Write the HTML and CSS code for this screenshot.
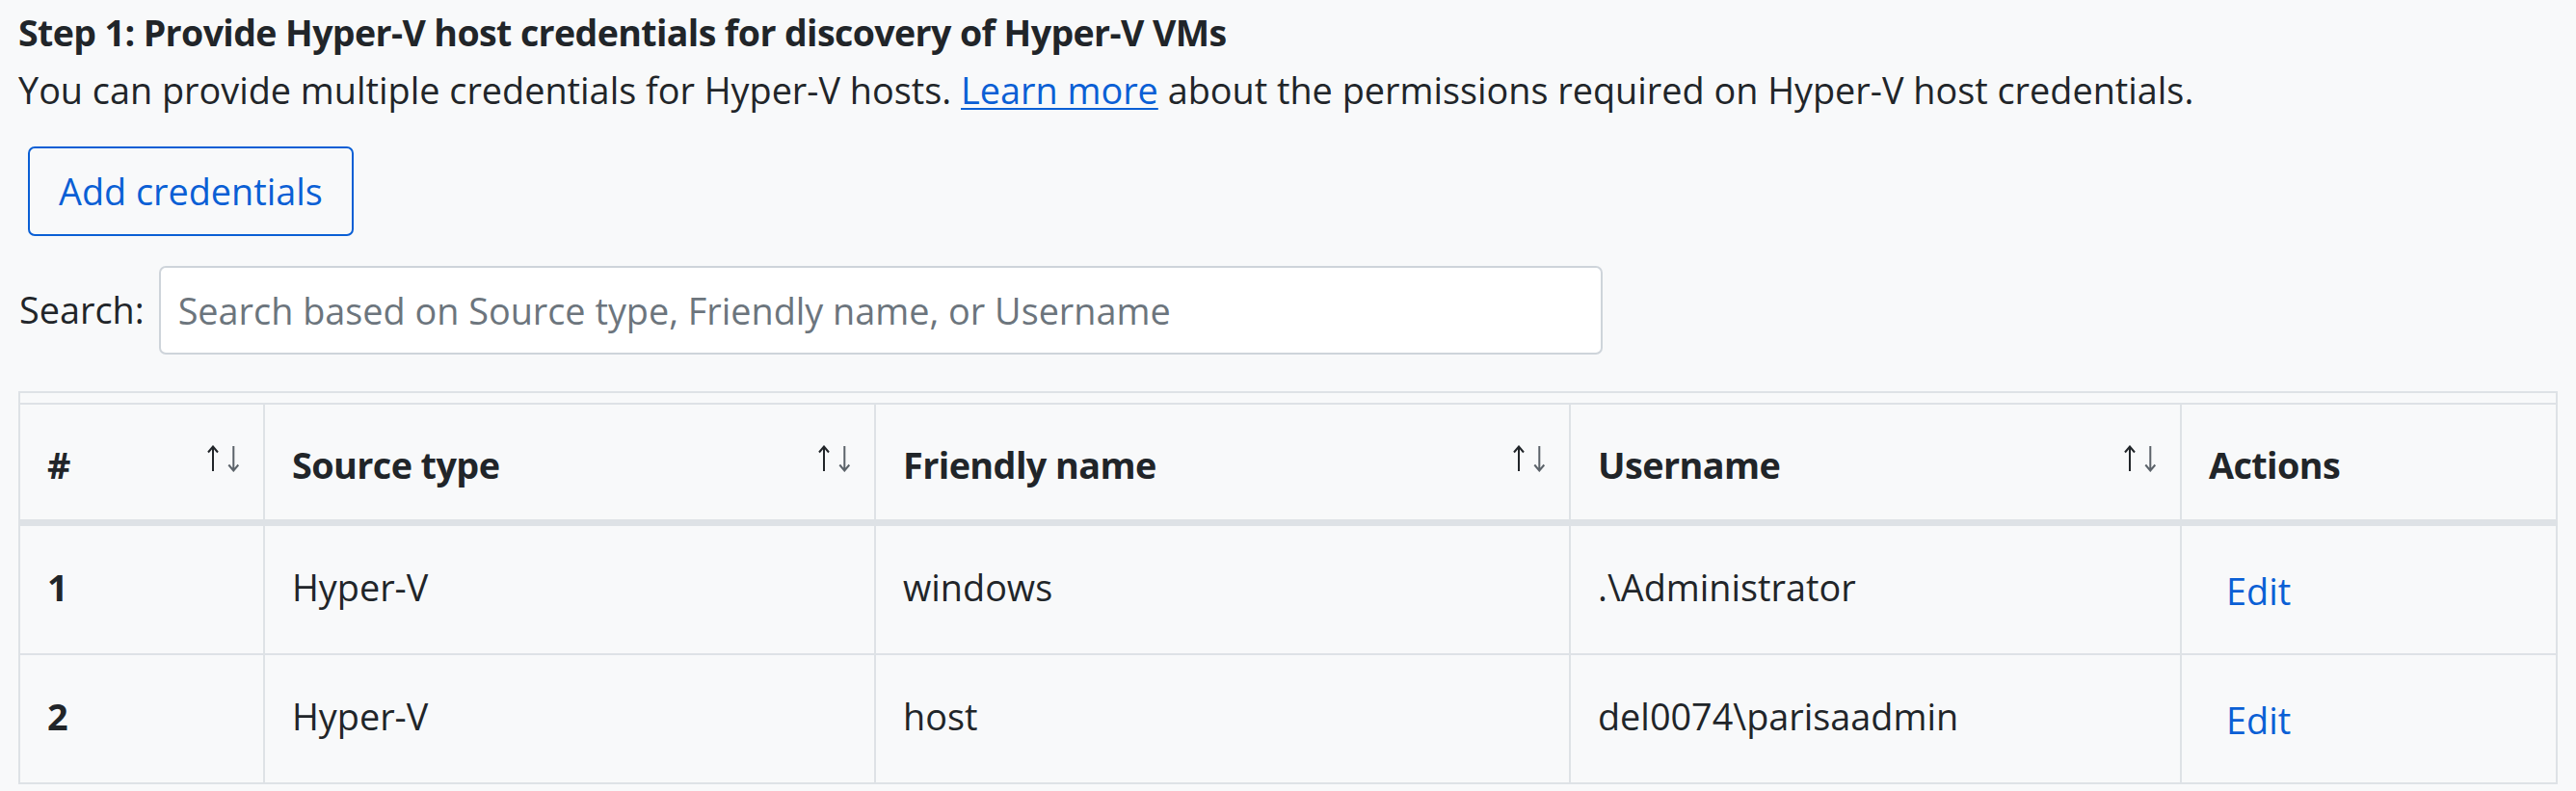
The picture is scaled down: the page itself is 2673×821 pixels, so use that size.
FILE: index.html
```html
<!DOCTYPE html>
<html lang="en">
<head>
<meta charset="utf-8">
<title>Hyper-V host credentials</title>
<link rel="stylesheet" href="styles.css">
</head>
<body>
<main class="page">
  <h2 class="step-title">Step 1: Provide Hyper-V host credentials for discovery of Hyper-V VMs</h2>
  <p class="step-desc">You can provide multiple credentials for Hyper-V hosts. <a href="#" class="link">Learn more</a> about the permissions required on Hyper-V host credentials.</p>
  <button type="button" class="btn-outline">Add credentials</button>
  <div class="search-row">
    <label class="search-label" for="search">Search:</label>
    <input id="search" class="search-input" type="text" placeholder="Search based on Source type, Friendly name, or Username">
  </div>
  <div class="table-wrap">
    <table class="cred-table">
      <colgroup>
        <col class="c1"><col class="c2"><col class="c3"><col class="c4"><col class="c5">
      </colgroup>
      <thead>
        <tr>
          <th><div class="th-inner"><span>#</span><svg class="sort" viewBox="0 0 35 28" width="35" height="28"><path class="up" d="M6 27V2M1 7.5L6 1.5L11 7.5"/><path class="down" d="M27.3 1V26M22.3 20.5L27.3 26.5L32.3 20.5"/></svg></div></th>
          <th><div class="th-inner"><span>Source type</span><svg class="sort" viewBox="0 0 35 28" width="35" height="28"><path class="up" d="M6 27V2M1 7.5L6 1.5L11 7.5"/><path class="down" d="M27.3 1V26M22.3 20.5L27.3 26.5L32.3 20.5"/></svg></div></th>
          <th><div class="th-inner"><span>Friendly name</span><svg class="sort" viewBox="0 0 35 28" width="35" height="28"><path class="up" d="M6 27V2M1 7.5L6 1.5L11 7.5"/><path class="down" d="M27.3 1V26M22.3 20.5L27.3 26.5L32.3 20.5"/></svg></div></th>
          <th><div class="th-inner"><span>Username</span><svg class="sort" viewBox="0 0 35 28" width="35" height="28"><path class="up" d="M6 27V2M1 7.5L6 1.5L11 7.5"/><path class="down" d="M27.3 1V26M22.3 20.5L27.3 26.5L32.3 20.5"/></svg></div></th>
          <th><div class="th-inner"><span>Actions</span></div></th>
        </tr>
      </thead>
      <tbody>
        <tr>
          <td class="num">1</td>
          <td>Hyper-V</td>
          <td>windows</td>
          <td>.\Administrator</td>
          <td><a href="#" class="edit">Edit</a></td>
        </tr>
        <tr>
          <td class="num">2</td>
          <td>Hyper-V</td>
          <td>host</td>
          <td>del0074\parisaadmin</td>
          <td><a href="#" class="edit">Edit</a></td>
        </tr>
      </tbody>
    </table>
  </div>
</main>
</body>
</html>
```

FILE: styles.css
```css
* { box-sizing: border-box; }

html, body {
  margin: 0;
  background: #f8f9fa;
}

body {
  font-family: "Open Sans", "Noto Sans", "Liberation Sans", sans-serif;
  font-size: 37.8px;
  line-height: 57.6px;
  color: #212529;
}

.page {
  padding: 5px 19px 0 19px;
}

.step-title {
  margin: 0 0 2px 0;
  font-size: 37.5px;
  line-height: 57.6px;
  font-weight: 700;
  letter-spacing: -0.6px;
}

.step-desc {
  margin: 0 0 30px 0;
}

.link {
  color: #0a5fd5;
  text-decoration: underline;
  text-decoration-thickness: 2px;
  text-underline-offset: 4px;
}

.btn-outline {
  display: block;
  margin: 0 0 31px 10px;
  padding: 15.5px 30px;
  font-family: inherit;
  font-size: 37.8px;
  line-height: 57.6px;
  color: #0a5fd5;
  background: transparent;
  border: 2px solid #0a5fd5;
  border-radius: 7px;
}

.search-row {
  display: flex;
  align-items: center;
  gap: 15px;
  margin-bottom: 38px;
}

.search-label {
  flex: none;
  padding-left: 1px;
}

.search-input {
  width: 1498px;
  height: 92.6px;
  padding: 0 18px;
  font-family: inherit;
  font-size: 37.8px;
  color: #212529;
  background: #fff;
  border: 2px solid #ced4da;
  border-radius: 7px;
}

.search-input::placeholder {
  color: #6c757d;
}

.table-wrap {
  border: 2px solid #dee2e6;
  padding-top: 10px;
  width: 2635px;
}

.cred-table {
  width: 2631px;
  table-layout: fixed;
  border-collapse: separate;
  border-spacing: 0;
}

.c1 { width: 252px; }
.c2 { width: 634px; }
.c3 { width: 721px; }
.c4 { width: 634px; }
.c5 { width: 390px; }

.cred-table th,
.cred-table td {
  text-align: left;
  vertical-align: top;
  border-left: 2px solid #dee2e6;
}

.cred-table th:first-child,
.cred-table td:first-child {
  border-left: none;
}

.cred-table th {
  border-top: 2px solid #dee2e6;
  border-bottom: 7px solid #dee2e6;
  padding: 33.7px 23px 27.7px 28px;
  font-weight: 700;
  letter-spacing: -0.6px;
}

.th-inner {
  display: flex;
  align-items: center;
  justify-content: space-between;
}

.sort {
  flex: none;
  margin-bottom: 14px;
  fill: none;
  stroke-width: 2;
}

.sort .up { stroke: #212529; }
.sort .down { stroke: #5c636a; }

.cred-table td {
  padding: 35px 28px 35.4px 28px;
}

.cred-table tbody tr:first-child td {
  border-bottom: 2px solid #dee2e6;
}

.cred-table td.num {
  font-weight: 700;
}

.edit {
  display: inline-block;
  padding-left: 18px;
  color: #0a5fd5;
  text-decoration: none;
  vertical-align: -4px;
}
```
